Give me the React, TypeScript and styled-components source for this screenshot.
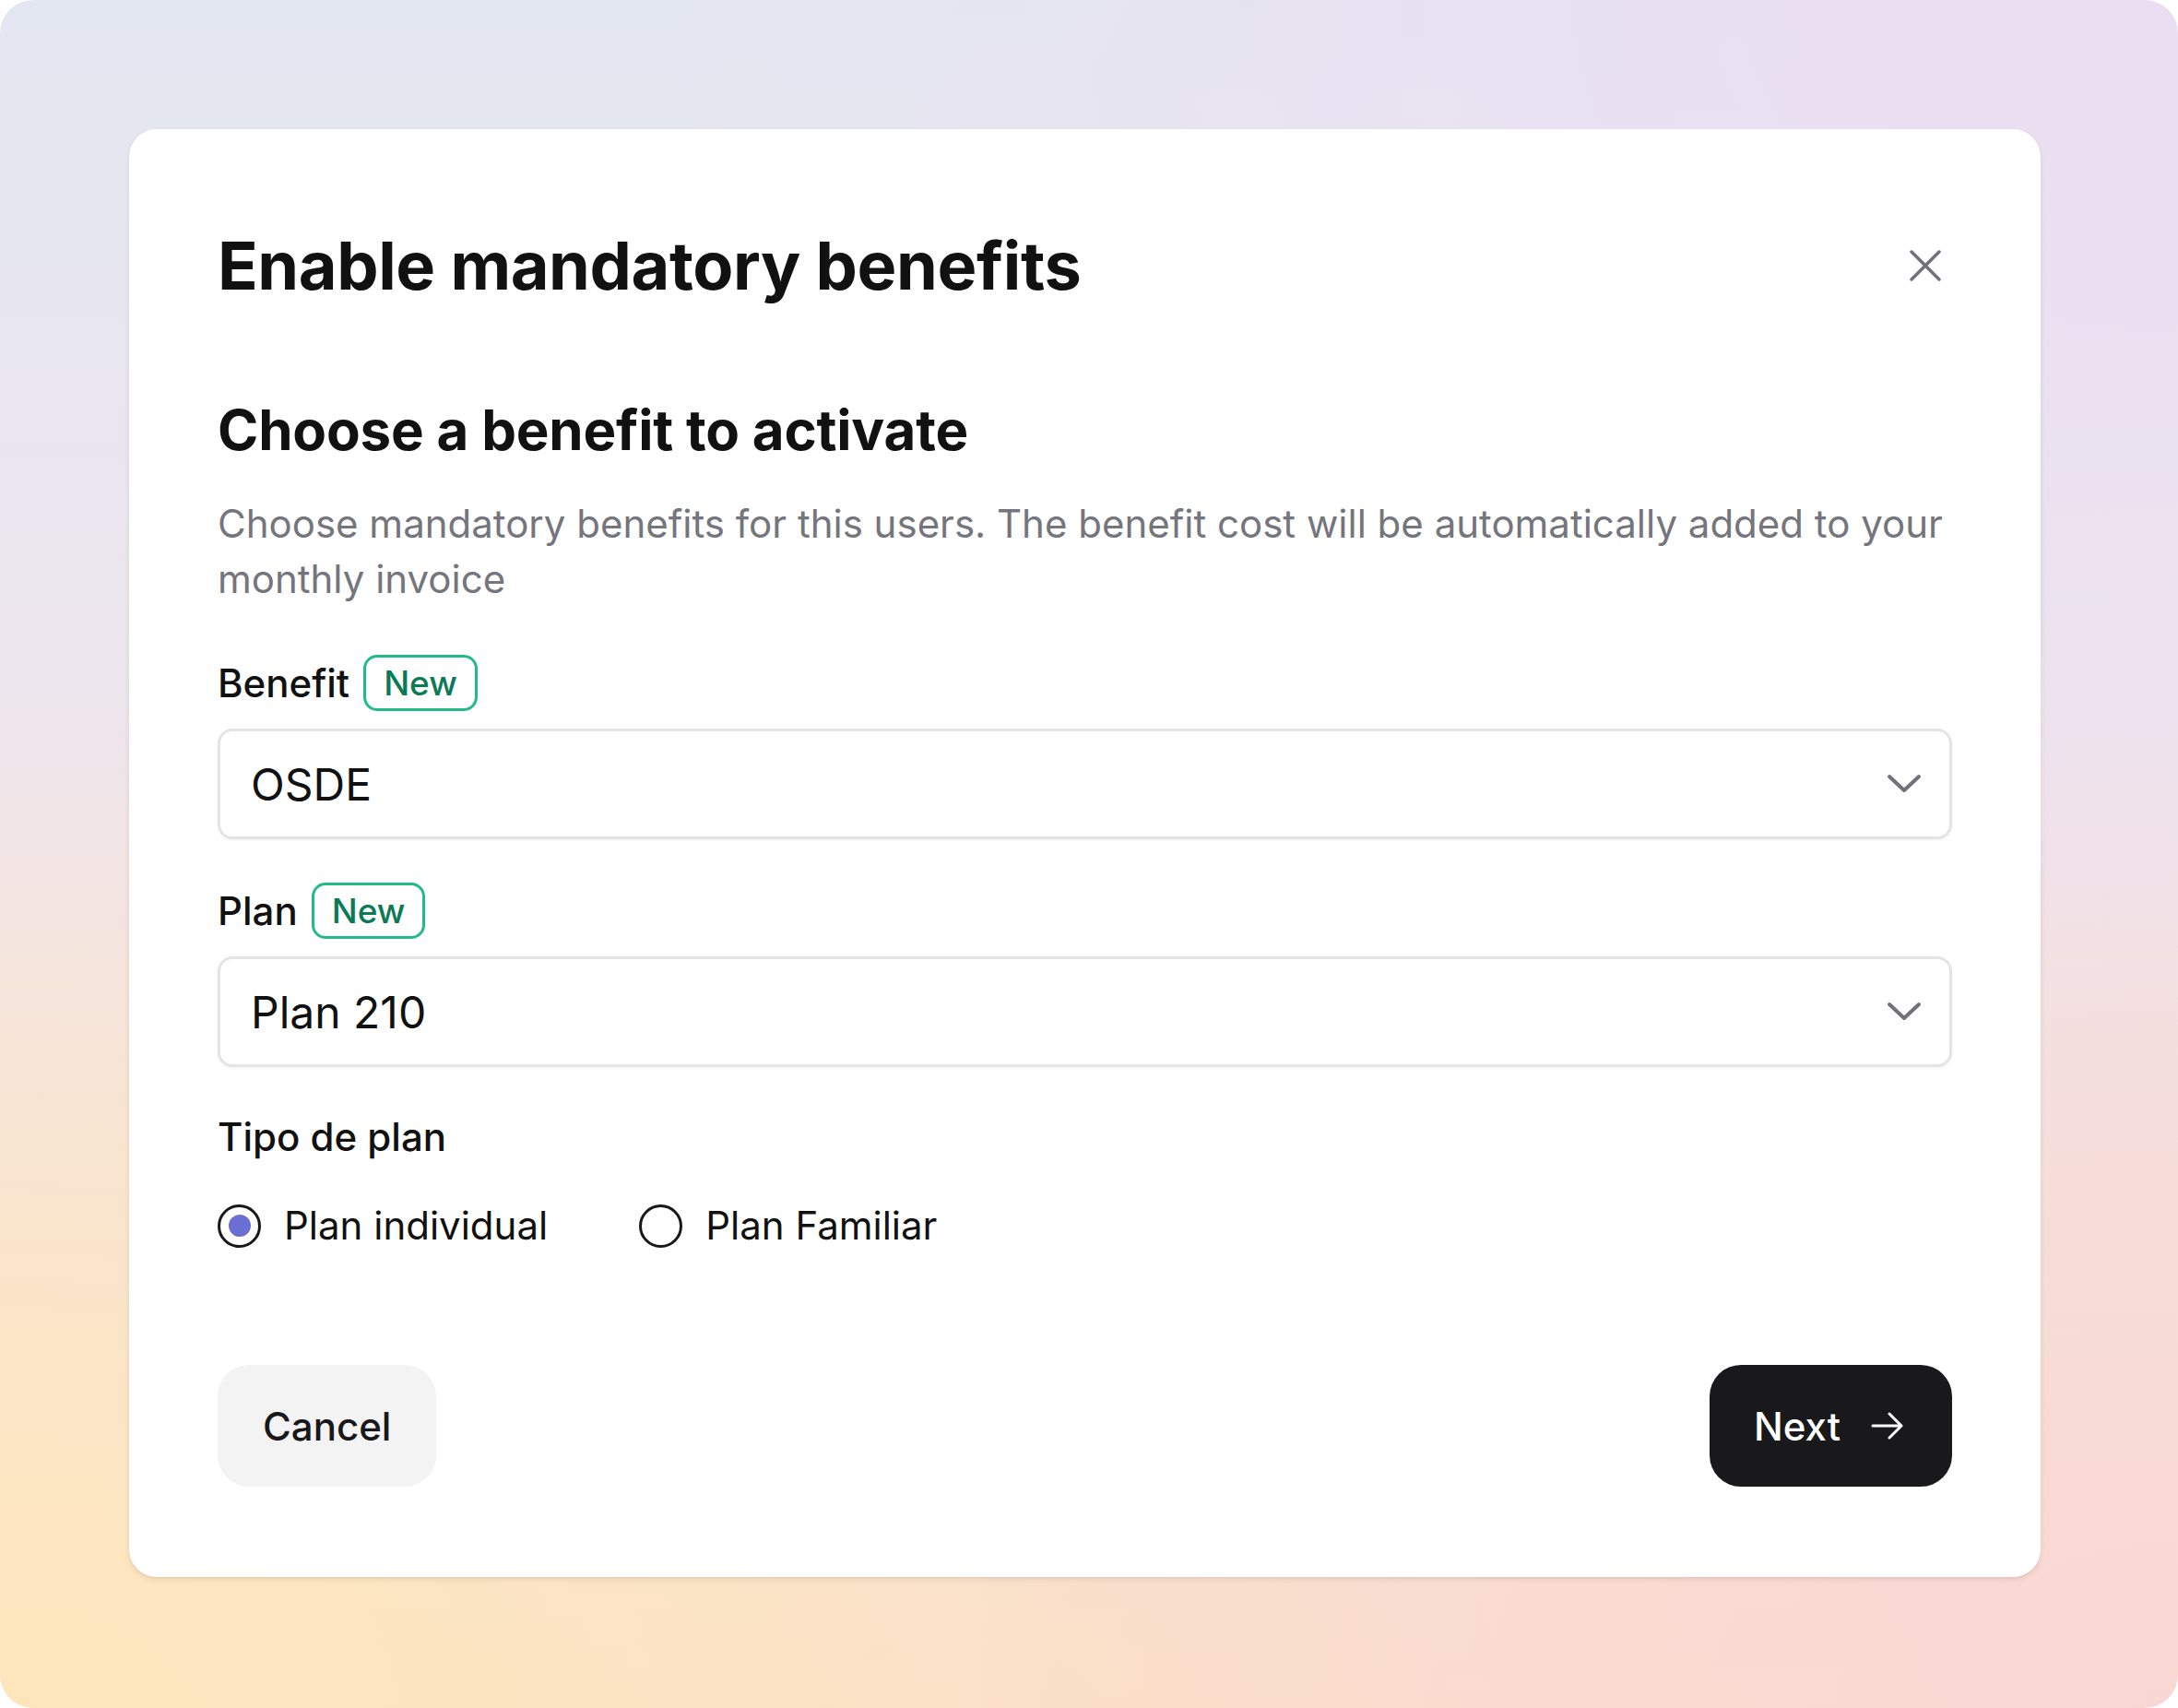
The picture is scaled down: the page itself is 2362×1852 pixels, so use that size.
import styled, { createGlobalStyle } from "styled-components";
import { useState } from "react";

const GlobalStyle = createGlobalStyle`
  html, body {
    margin: 0;
    padding: 0;
    background: #ffffff;
  }
  body {
    font-family: Inter, "Noto Sans", "Liberation Sans", sans-serif;
    color: #111111;
  }
  * { box-sizing: border-box; }
`;

const Page = styled.div`
  width: 2362px;
  height: 1852px;
  padding: 140px 149px 140px 140px;
  border-radius: 36px;
  overflow: hidden;
  background:
    radial-gradient(ellipse 70% 60% at 0% 100%, rgba(253, 230, 188, 1) 0%, rgba(253, 230, 188, 0) 100%),
    radial-gradient(ellipse 70% 60% at 100% 100%, rgba(249, 216, 212, 1) 0%, rgba(249, 216, 212, 0) 100%),
    radial-gradient(ellipse 70% 60% at 100% 0%, rgba(236, 222, 242, 1) 0%, rgba(236, 222, 242, 0) 100%),
    linear-gradient(180deg, #e3e7f1 0%, #efe4ec 50%, #fbe0cc 100%);
`;

const Card = styled.div`
  background: #ffffff;
  border-radius: 30px;
  padding: 105px 96px 98px;
  box-shadow: 0 3px 6px rgba(80, 60, 40, 0.09), 0 1px 2px rgba(0, 0, 0, 0.06);
  display: flex;
  flex-direction: column;
`;

const Header = styled.div`
  display: flex;
  align-items: center;
  justify-content: space-between;
`;

const Title = styled.h1`
  margin: 0;
  font-size: 72px;
  line-height: 86px;
  font-weight: 700;
  letter-spacing: -0.4px;
  color: #111111;
`;

const CloseButton = styled.button`
  border: none;
  background: none;
  padding: 0;
  margin-right: 12px;
  width: 34px;
  height: 34px;
  display: flex;
  cursor: pointer;
`;

const Subtitle = styled.h2`
  margin: 101px 0 0;
  font-size: 60px;
  line-height: 68px;
  font-weight: 700;
  letter-spacing: -0.2px;
  color: #111111;
`;

const Description = styled.p`
  margin: 38px 0 0;
  font-size: 42px;
  line-height: 60px;
  color: #75757d;
`;

const Field = styled.div<{ $top: number }>`
  margin-top: ${(p) => p.$top}px;
  display: flex;
  flex-direction: column;
  gap: 19px;
`;

const LabelRow = styled.div`
  display: flex;
  align-items: center;
  gap: 15px;
  min-height: 61px;
`;

const Label = styled.span`
  font-size: 42px;
  line-height: 50px;
  font-weight: 500;
  color: #111111;
`;

const Badge = styled.span`
  display: inline-flex;
  align-items: center;
  height: 61px;
  padding: 0 19px;
  border: 3px solid #22bb88;
  border-radius: 15px;
  font-size: 37px;
  font-weight: 500;
  color: #0b7a57;
`;

const Select = styled.div`
  height: 120px;
  border: 3px solid #e4e4e7;
  border-radius: 16px;
  padding: 0 30px 0 33px;
  display: flex;
  align-items: center;
  justify-content: space-between;
  box-shadow: 0 2px 3px rgba(0, 0, 0, 0.04);
  background: #ffffff;
  cursor: pointer;
`;

const SelectValue = styled.span`
  font-size: 48px;
  color: #111111;
`;

const RadioGroup = styled.div`
  margin-top: 41px;
  display: flex;
  align-items: center;
  gap: 99px;
`;

const RadioOption = styled.label`
  display: flex;
  align-items: center;
  gap: 25px;
  cursor: pointer;
`;

const RadioCircle = styled.span<{ $checked: boolean }>`
  width: 47px;
  height: 47px;
  border-radius: 50%;
  border: 3px solid #18181b;
  display: flex;
  align-items: center;
  justify-content: center;
  &::after {
    content: "";
    width: 24px;
    height: 24px;
    border-radius: 50%;
    background: ${(p) => (p.$checked ? "#6a70d3" : "transparent")};
  }
`;

const RadioText = styled.span`
  font-size: 42px;
  line-height: 50px;
  color: #111111;
`;

const Footer = styled.div`
  margin-top: 126px;
  display: flex;
  justify-content: space-between;
  align-items: center;
`;

const Button = styled.button<{ $primary?: boolean }>`
  height: 132px;
  border: none;
  border-radius: 34px;
  padding: ${(p) => (p.$primary ? "0 52px 0 48px" : "0 49px")};
  display: flex;
  align-items: center;
  gap: 33px;
  font-family: inherit;
  font-size: 42px;
  font-weight: 500;
  background: ${(p) => (p.$primary ? "#19191b" : "#f3f3f3")};
  color: ${(p) => (p.$primary ? "#ffffff" : "#18181b")};
  cursor: pointer;
`;

function Chevron() {
  return (
    <svg width="38" height="24" viewBox="0 0 38 24" fill="none">
      <polyline points="3,4 19,19 35,4" stroke="#71717a" strokeWidth="4" strokeLinecap="round" strokeLinejoin="round" />
    </svg>
  );
}

function CloseIcon() {
  return (
    <svg width="34" height="34" viewBox="0 0 34 34" fill="none">
      <path d="M2 2 L32 32 M32 2 L2 32" stroke="#71717a" strokeWidth="3.5" strokeLinecap="round" />
    </svg>
  );
}

function ArrowRight() {
  return (
    <svg width="36" height="30" viewBox="0 0 36 30" fill="none">
      <path d="M2 15 H33 M20 2 L33 15 L20 28" stroke="#ffffff" strokeWidth="3" strokeLinecap="round" strokeLinejoin="round" />
    </svg>
  );
}

export default function App() {
  const [planType, setPlanType] = useState("individual");

  return (
    <>
      <GlobalStyle />
      <Page>
        <Card>
          <Header>
            <Title>Enable mandatory benefits</Title>
            <CloseButton aria-label="Close">
              <CloseIcon />
            </CloseButton>
          </Header>

          <Subtitle>Choose a benefit to activate</Subtitle>
          <Description>
            Choose mandatory benefits for this users. The benefit cost will be automatically added to your monthly invoice
          </Description>

          <Field $top={52}>
            <LabelRow>
              <Label>Benefit</Label>
              <Badge>New</Badge>
            </LabelRow>
            <Select>
              <SelectValue>OSDE</SelectValue>
              <Chevron />
            </Select>
          </Field>

          <Field $top={47}>
            <LabelRow>
              <Label>Plan</Label>
              <Badge>New</Badge>
            </LabelRow>
            <Select>
              <SelectValue>Plan 210</SelectValue>
              <Chevron />
            </Select>
          </Field>

          <Field $top={45}>
            <LabelRow>
              <Label>Tipo de plan</Label>
            </LabelRow>
          </Field>

          <RadioGroup>
            <RadioOption onClick={() => setPlanType("individual")}>
              <RadioCircle $checked={planType === "individual"} />
              <RadioText>Plan individual</RadioText>
            </RadioOption>
            <RadioOption onClick={() => setPlanType("familiar")}>
              <RadioCircle $checked={planType === "familiar"} />
              <RadioText>Plan Familiar</RadioText>
            </RadioOption>
          </RadioGroup>

          <Footer>
            <Button>Cancel</Button>
            <Button $primary>
              Next
              <ArrowRight />
            </Button>
          </Footer>
        </Card>
      </Page>
    </>
  );
}
